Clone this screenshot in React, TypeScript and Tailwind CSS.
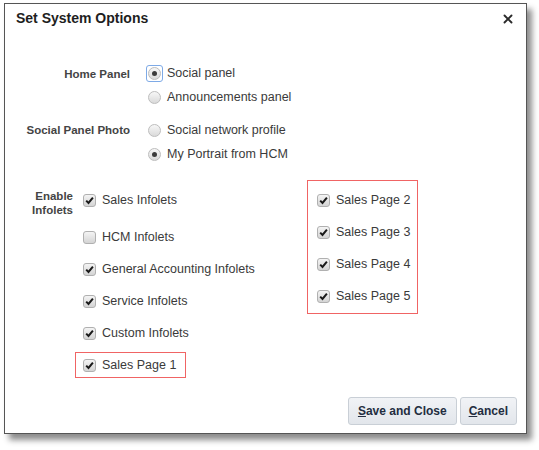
import { X } from "lucide-react";

function Radio({ checked, focused }: { checked?: boolean; focused?: boolean }) {
  const dot = (
    <span className="flex h-[13px] w-[13px] items-center justify-center rounded-full border border-[#bdbdbd] bg-gradient-to-b from-[#f7f7f7] to-[#dadada]">
      {checked && <span className="h-[5px] w-[5px] rounded-full bg-[#3c3c3c]" />}
    </span>
  );
  if (focused) {
    return (
      <span className="-m-[2px] flex h-[17px] w-[17px] items-center justify-center rounded-[3px] border border-[#7eaae6]">
        {dot}
      </span>
    );
  }
  return dot;
}

function Check({ checked = true }: { checked?: boolean }) {
  return (
    <span className="flex h-[13px] w-[13px] shrink-0 items-center justify-center rounded-[3px] border border-[#b0b0b0] bg-gradient-to-b from-[#f4f4f4] to-[#d4d4d4]">
      {checked && (
        <svg width="9" height="9" viewBox="0 0 9 9">
          <path d="M1.2 4.6 L3.5 7 L7.9 1.6" fill="none" stroke="#1a1a1a" strokeWidth="2" />
        </svg>
      )}
    </span>
  );
}

function RadioRow({ label, checked, focused }: { label: string; checked?: boolean; focused?: boolean }) {
  return (
    <div className="flex h-[24px] items-center gap-[6px]">
      <Radio checked={checked} focused={focused} />
      <span className="text-[12.5px] text-[#3a3a3a]">{label}</span>
    </div>
  );
}

function CheckRow({ label, checked, h = "h-[32px]" }: { label: string; checked?: boolean; h?: string }) {
  return (
    <div className={`flex items-center gap-[6px] ${h}`}>
      <Check checked={checked} />
      <span className="text-[12.5px] text-[#3a3a3a]">{label}</span>
    </div>
  );
}

export default function App() {
  return (
    <div className="h-[450px] w-[539px] bg-white pl-[4px] pt-[3px] font-['Liberation_Sans',Arial,sans-serif]">
      <div className="flex h-[431px] w-[523px] flex-col border border-[#555] bg-white shadow-[5px_6px_6px_rgba(0,0,0,0.45)]">
        {/* header */}
        <div className="flex items-center justify-between pl-[11px] pr-[11px] pt-[4px]">
          <h1 className="text-[14px] font-bold leading-[20px] text-[#1e1e1e]">Set System Options</h1>
          <X size={14} strokeWidth={3.2} className="mt-[2px] text-[#2a2a2a]" />
        </div>

        {/* radio groups */}
        <div className="mt-[33px] flex flex-col gap-[9px]">
          <div className="flex">
            <div className="w-[125px] shrink-0 pt-[5px] text-right text-[11.5px] font-bold text-[#444]">Home Panel</div>
            <div className="ml-[18px] flex flex-col">
              <RadioRow label="Social panel" checked focused />
              <RadioRow label="Announcements panel" />
            </div>
          </div>
          <div className="flex">
            <div className="w-[125px] shrink-0 pt-[4px] text-right text-[11.5px] font-bold text-[#444]">Social Panel Photo</div>
            <div className="ml-[18px] flex flex-col">
              <RadioRow label="Social network profile" />
              <RadioRow label="My Portrait from HCM" checked />
            </div>
          </div>
        </div>

        {/* infolets */}
        <div className="mt-[14px] flex items-start">
          <div className="flex w-[302px] shrink-0">
            <div className="w-[68px] shrink-0 pt-[9px] text-right text-[11.5px] font-bold leading-[14px] text-[#444]">
              Enable
              <br />
              Infolets
            </div>
            <div className="ml-[2px] flex flex-col">
              <div className="pl-[8px]">
                <CheckRow label="Sales Infolets" checked h="h-[41px]" />
                <CheckRow label="HCM Infolets" checked={false} />
                <CheckRow label="General Accounting Infolets" checked />
                <CheckRow label="Service Infolets" checked />
                <CheckRow label="Custom Infolets" checked />
              </div>
              <div className="mt-[3px] w-[111px] border border-[#f06464] pl-[7px]">
                <CheckRow label="Sales Page 1" checked h="h-[24px]" />
              </div>
            </div>
          </div>
          <div className="w-[111px] border border-[#f06464] pb-[1px] pl-[9px] pt-[3px]">
            <CheckRow label="Sales Page 2" checked />
            <CheckRow label="Sales Page 3" checked />
            <CheckRow label="Sales Page 4" checked />
            <CheckRow label="Sales Page 5" checked />
          </div>
        </div>

        {/* buttons */}
        <div className="mt-auto flex justify-end gap-[3px] pb-[8px] pr-[9px]">
          <button className="h-[28px] rounded-[3px] border border-[#c9cfd6] bg-gradient-to-b from-[#f1f3f6] to-[#e2e6eb] px-[9px] text-[12px] font-bold text-[#232d40]">
            <span className="underline">S</span>ave and Close
          </button>
          <button className="h-[28px] rounded-[3px] border border-[#c9cfd6] bg-gradient-to-b from-[#f1f3f6] to-[#e2e6eb] px-[8px] text-[12px] font-bold text-[#232d40]">
            <span className="underline">C</span>ancel
          </button>
        </div>
      </div>
    </div>
  );
}
